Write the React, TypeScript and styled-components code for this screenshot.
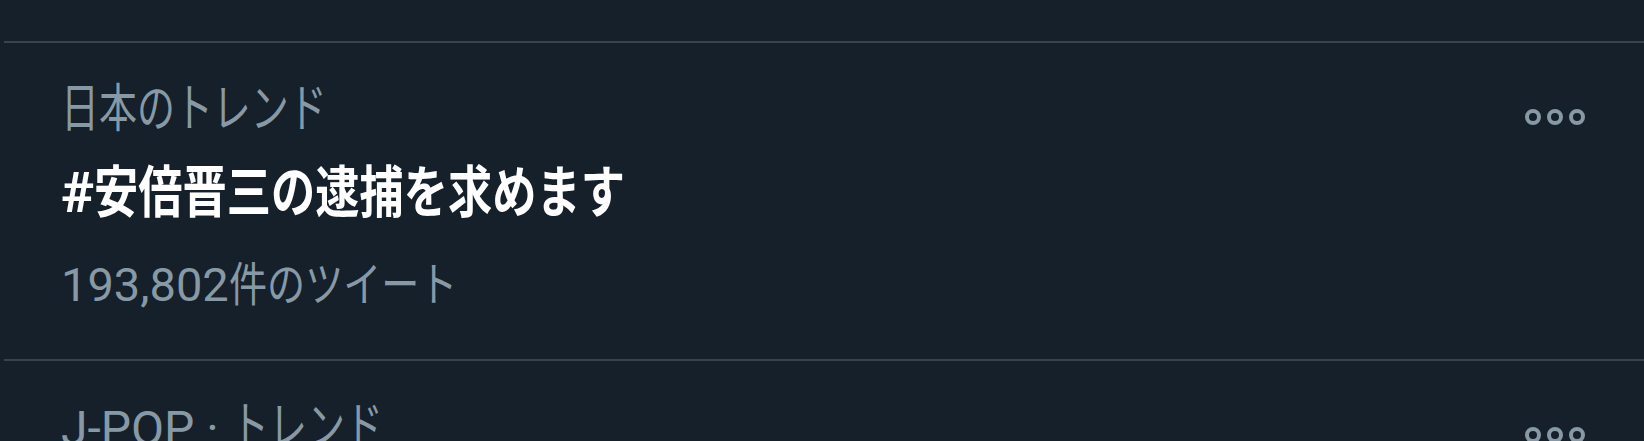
import styled, { createGlobalStyle } from 'styled-components';

interface Trend {
  context: [string, string];
  title?: [string, string];
  count?: [string, string];
}

const trends: Trend[] = [
  {
    context: ['', '日本のトレンド'],
    title: ['#', '安倍晋三の逮捕を求めます'],
    count: ['193,802', '件のツイート'],
  },
  {
    context: ['J-POP · ', 'トレンド'],
  },
];

const App = () => {
  return (
    <>
      <GlobalStyle />
      <Page>
        <List>
          {trends.map((t, i) => (
            <Row key={i}>
              <Body>
                <Context>
                  {t.context[0]}
                  <Narrow $scale={0.73} $size={52}>
                    {t.context[1]}
                  </Narrow>
                </Context>
                {t.title && (
                  <Title>
                    {t.title[0]}
                    <Narrow $scale={0.79}>{t.title[1]}</Narrow>
                  </Title>
                )}
                {t.count && (
                  <Count>
                    {t.count[0]}
                    <Narrow $scale={0.81}>{t.count[1]}</Narrow>
                  </Count>
                )}
              </Body>
              <More aria-label="その他">
                <Ring />
                <Ring />
                <Ring />
              </More>
            </Row>
          ))}
        </List>
      </Page>
    </>
  );
};

export default App;

// Styles
const GlobalStyle = createGlobalStyle`
  html, body {
    margin: 0;
    padding: 0;
    background: #15202b;
    overflow: hidden;
  }
  body {
    font-family: Roboto, "Noto Sans CJK JP", sans-serif;
  }
`;

const Page = styled.div`
  width: 1644px;
  height: 441px;
  overflow: hidden;
  background: #15202b;
  padding-top: 41px;
  box-sizing: border-box;
`;

const List = styled.div`
  display: flex;
  flex-direction: column;
`;

const Row = styled.div`
  display: flex;
  align-items: flex-start;
  margin-left: 4px;
  height: 318px;
  box-sizing: border-box;
  border-top: 2px solid #38444d;
  padding: 38px 59px 0 57px;
`;

const Body = styled.div`
  flex: 1;
  display: flex;
  flex-direction: column;
`;

// CJK glyphs in the reference are drawn narrower than Noto's full-width boxes
const Narrow = styled.span<{ $scale: number; $size?: number }>`
  display: inline-block;
  font-size: ${(p) => (p.$size ? `${p.$size}px` : 'inherit')};
  transform: scaleX(${(p) => p.$scale});
  transform-origin: left center;
  white-space: nowrap;
`;

const Context = styled.div`
  height: 58px;
  font-size: 48px;
  line-height: 58px;
  color: #8899a6;
  white-space: nowrap;
`;

const Title = styled.div`
  margin-top: 22px;
  font-size: 56px;
  line-height: 64px;
  font-weight: 700;
  color: #ffffff;
  white-space: nowrap;
`;

const Count = styled.div`
  margin-top: 32px;
  font-size: 47px;
  line-height: 56px;
  color: #8899a6;
  white-space: nowrap;
`;

const More = styled.div`
  display: flex;
  gap: 6px;
  margin-top: 28px;
`;

const Ring = styled.span`
  width: 16px;
  height: 16px;
  box-sizing: border-box;
  border: 4px solid #8899a6;
  border-radius: 50%;
`;
